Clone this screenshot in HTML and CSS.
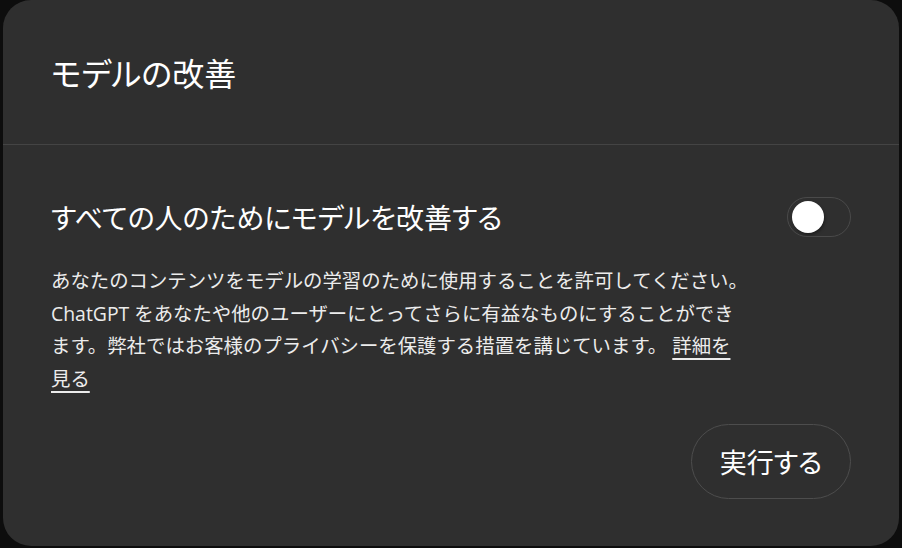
FILE: index.html
```html
<!DOCTYPE html>
<html lang="ja">
<head>
<meta charset="utf-8">
<title>モデルの改善</title>
<link rel="stylesheet" href="styles.css">
</head>
<body>
<div class="modal">
  <header class="modal-header">
    <h1 class="modal-title">モデルの改善</h1>
  </header>
  <section class="modal-body">
    <div class="setting-row">
      <h2 class="setting-label">すべての人のためにモデルを改善する</h2>
      <button class="toggle" type="button" aria-pressed="false"><span class="knob"></span></button>
    </div>
    <p class="desc">あなたのコンテンツをモデルの学習のために使用することを許可してください。<br>ChatGPT をあなたや他のユーザーにとってさらに有益なものにすることができ<br>ます。弊社ではお客様のプライバシーを保護する措置を講じています。 <a class="link" href="#">詳細を<br>見る</a></p>
    <div class="actions">
      <button class="btn" type="button">実行する</button>
    </div>
  </section>
</div>
</body>
</html>
```

FILE: styles.css
```css
html, body {
  margin: 0;
  padding: 0;
  background: #0d0d0d;
  height: 100%;
  overflow: hidden;
}

body {
  font-family: "Noto Sans CJK JP", sans-serif;
  color: #ececec;
}

.modal {
  margin-left: 3px;
  width: 896px;
  height: 546px;
  background: #2f2f2f;
  border-radius: 28px;
  box-sizing: border-box;
  display: flex;
  flex-direction: column;
}

.modal-header {
  height: 145px;
  box-sizing: border-box;
  border-bottom: 1px solid #444444;
  display: flex;
  align-items: center;
  padding-left: 48px;
}

.modal-title {
  margin: 0;
  font-size: 32px;
  font-feature-settings: "palt";
  font-weight: 400;
  color: #ffffff;
  line-height: 1;
}

.modal-body {
  padding: 52px 48px 0 48px;
  display: flex;
  flex-direction: column;
}

.setting-row {
  display: flex;
  align-items: center;
  justify-content: space-between;
  height: 40px;
}

.setting-label {
  margin: 0;
  font-size: 28px;
  font-feature-settings: "palt";
  font-weight: 400;
  color: #ffffff;
  line-height: 1;
}

.toggle {
  width: 64px;
  height: 40px;
  border-radius: 20px;
  border: 1.5px solid #4a4a4a;
  background: #2f2f2f;
  padding: 0 0 0 4px;
  box-sizing: border-box;
  display: flex;
  align-items: center;
  cursor: pointer;
}

.knob {
  width: 32px;
  height: 32px;
  border-radius: 50%;
  background: #ffffff;
  box-shadow: 1px 2px 3px rgba(0, 0, 0, 0.35);
}

.desc {
  margin: 28px 0 0 0;
  font-family: "Open Sans", "Noto Sans CJK JP", sans-serif;
  font-size: 19.4px;
  line-height: 32.5px;
  color: #ececec;
}

.link {
  color: #ececec;
  text-decoration: underline;
  text-decoration-thickness: 1.5px;
  text-underline-offset: 5px;
}

.actions {
  display: flex;
  justify-content: flex-end;
  margin-top: 29px;
}

.btn {
  width: 160px;
  height: 75px;
  border-radius: 38px;
  border: 1.5px solid #4d4d4d;
  background: transparent;
  color: #ffffff;
  font-family: "Noto Sans CJK JP", sans-serif;
  font-feature-settings: "palt";
  font-size: 27px;
  line-height: 1;
  padding: 0;
  cursor: pointer;
}
```
